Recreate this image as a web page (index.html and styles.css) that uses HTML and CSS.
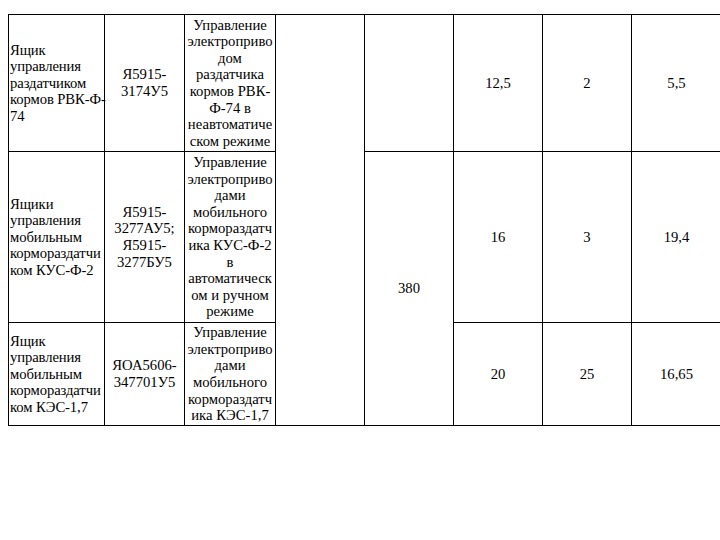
FILE: index.html
```html
<!DOCTYPE html>
<html lang="ru">
<head>
<meta charset="utf-8">
<title>Ящики управления</title>
<link rel="stylesheet" href="styles.css">
</head>
<body>
<div class="page">
<table class="spec">
  <colgroup>
    <col class="w-name">
    <col class="w-type">
    <col class="w-func">
    <col class="w-empty">
    <col class="w-volt">
    <col class="w-num">
    <col class="w-num">
    <col class="w-last">
  </colgroup>
  <tr class="r1">
    <td class="name">Ящик<br>управления<br>раздатчиком<br>кормов РВК-Ф-<br>74</td>
    <td class="center">Я5915-<br>3174У5</td>
    <td class="center">Управление<br>электроприво<br>дом<br>раздатчика<br>кормов РВК-<br>Ф-74 в<br>неавтоматиче<br>ском режиме</td>
    <td class="center" rowspan="3"></td>
    <td class="center"></td>
    <td class="center">12,5</td>
    <td class="center">2</td>
    <td class="center">5,5</td>
  </tr>
  <tr class="r2">
    <td class="name">Ящики<br>управления<br>мобильным<br>кормораздатчи<br>ком КУС-Ф-2</td>
    <td class="center">Я5915-<br>3277АУ5;<br>Я5915-<br>3277БУ5</td>
    <td class="center">Управление<br>электроприво<br>дами<br>мобильного<br>кормораздатч<br>ика КУС-Ф-2<br>в<br>автоматическ<br>ом и ручном<br>режиме</td>
    <td class="center" rowspan="2">380</td>
    <td class="center">16</td>
    <td class="center">3</td>
    <td class="center">19,4</td>
  </tr>
  <tr class="r3">
    <td class="name">Ящик<br>управления<br>мобильным<br>кормораздатчи<br>ком КЭС-1,7</td>
    <td class="center">ЯОА5606-<br>347701У5</td>
    <td class="center">Управление<br>электроприво<br>дами<br>мобильного<br>кормораздатч<br>ика КЭС-1,7</td>
    <td class="center">20</td>
    <td class="center">25</td>
    <td class="center">16,65</td>
  </tr>
</table>
</div>
</body>
</html>
```
FILE: styles.css
```css
html, body {
  margin: 0;
  padding: 0;
  background: #ffffff;
  overflow: hidden;
}

.page {
  padding: 14px 0 0 8px;
  width: 740px;
}

.spec {
  border-collapse: collapse;
  table-layout: fixed;
  width: 714px;
  font-family: "Liberation Serif", "Times New Roman", serif;
  font-size: 14.67px;
  line-height: 16.6px;
  color: #000;
}

.w-name { width: 96px; }
.w-type { width: 80px; }
.w-func { width: 91px; }
.w-empty { width: 89px; }
.w-volt { width: 89px; }
.w-num { width: 89px; }
.w-last { width: 90px; }

.spec td {
  border: 1px solid #000;
  padding: 0;
  vertical-align: middle;
  white-space: nowrap;
}

.spec td.name {
  text-align: left;
  padding-left: 1px;
  letter-spacing: -0.1px;
}

.spec td.center {
  text-align: center;
}

.r1 { height: 137px; }
.r2 { height: 171px; }
.r3 { height: 103px; }
```
